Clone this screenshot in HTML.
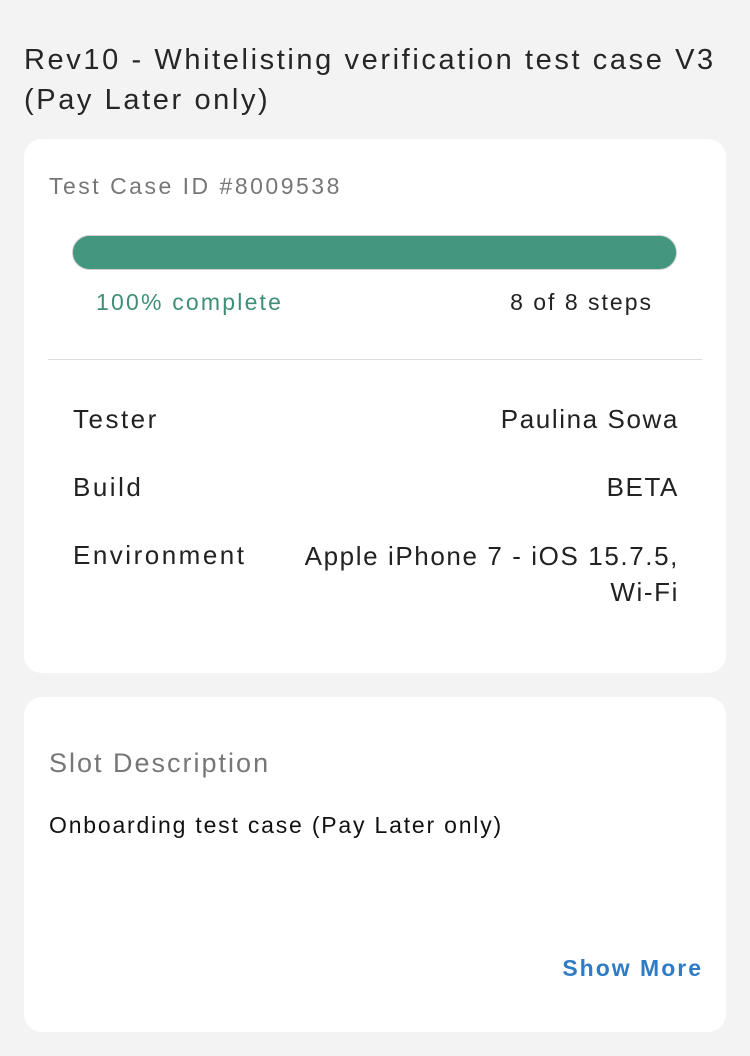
<!DOCTYPE html>
<html><head><meta charset="utf-8"><style>
body{margin:0;width:750px;height:1056px;background:#f3f3f3;font-family:"Liberation Sans",sans-serif;position:relative;overflow:hidden;color:#222}
.a{position:absolute;white-space:nowrap}
.card{position:absolute;left:24px;width:702px;background:#fff;border-radius:18px}
</style></head><body>
<div class="a" style="left:24px;top:40px;font-size:29px;line-height:40px;color:#262626;letter-spacing:2.6px">Rev10 - Whitelisting verification test case V3<br>(Pay Later only)</div>
<div class="card" style="top:139px;height:534px"></div>
<div class="a" style="left:49px;top:173px;font-size:23px;color:#777;letter-spacing:2.5px">Test Case ID #8009538</div>
<div class="a" style="left:72px;top:235px;width:605px;height:35px;background:#44967e;border-radius:18px;border:1px solid #d0d0d0;box-sizing:border-box"></div>
<div class="a" style="left:96px;top:289px;font-size:23px;color:#3f8f77;letter-spacing:2.2px">100% complete</div>
<div class="a" style="right:97px;top:289px;font-size:23px;color:#222;letter-spacing:2px">8 of 8 steps</div>
<div class="a" style="left:48px;top:359px;width:654px;height:1px;background:#ddd"></div>
<div class="a" style="left:73px;top:404px;font-size:26px;letter-spacing:2.5px">Tester</div>
<div class="a" style="right:71px;top:404px;font-size:26px;letter-spacing:1.6px">Paulina Sowa</div>
<div class="a" style="left:73px;top:472px;font-size:26px;letter-spacing:2.5px">Build</div>
<div class="a" style="right:71px;top:472px;font-size:26px;letter-spacing:1.6px">BETA</div>
<div class="a" style="left:73px;top:540px;font-size:26px;letter-spacing:2.5px">Environment</div>
<div class="a" style="right:71px;top:538px;font-size:26px;text-align:right;line-height:36px;letter-spacing:1.6px">Apple iPhone 7 - iOS 15.7.5,<br>Wi-Fi</div>
<div class="card" style="top:697px;height:335px"></div>
<div class="a" style="left:49px;top:748px;font-size:27px;color:#777;letter-spacing:2px">Slot Description</div>
<div class="a" style="left:49px;top:812px;font-size:23px;color:#111;letter-spacing:1.8px">Onboarding test case (Pay Later only)</div>
<div class="a" style="right:47px;top:955px;font-size:23px;color:#2f7cc4;font-weight:bold;letter-spacing:2px">Show More</div>
</body></html>
